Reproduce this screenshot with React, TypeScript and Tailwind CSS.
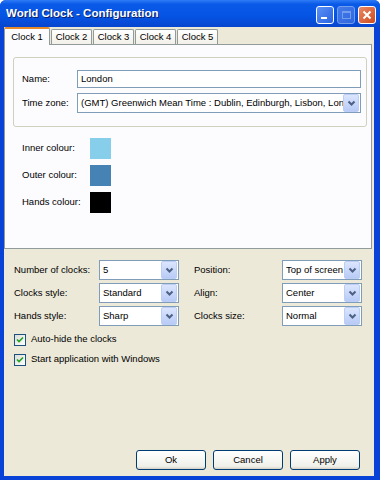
import React from "react";

const font = "font-['Liberation_Sans',Arial,sans-serif]";

const Chevron = () => (
  <svg width="9" height="7" viewBox="0 0 9 7" fill="none">
    <path d="M1.5 1.5 L4.5 4.5 L7.5 1.5" stroke="#4d6185" strokeWidth="2" />
  </svg>
);

const Combo = ({ value, width }: { value: string; width: string }) => (
  <div className={`${width} h-[20px] flex items-center border border-[#7f9db9] bg-white`}>
    <span className="flex-1 pl-[3px] overflow-hidden whitespace-nowrap text-black">{value}</span>
    <div className="w-[16px] h-[18px] mr-px flex items-center justify-center rounded-[2px] border border-[#bccdf6] bg-[linear-gradient(#dbe5fd,#b8cbf6)]">
      <Chevron />
    </div>
  </div>
);

const Check = ({ label }: { label: string }) => (
  <div className="flex items-center gap-[5px] h-[13px]">
    <div className="w-[12px] h-[12px] border border-[#1c5180] bg-[linear-gradient(135deg,#dcdcd5,#ffffff)] flex items-center justify-center">
      <svg width="8" height="8" viewBox="0 0 8 8">
        <path d="M1 3.5 L3 5.5 L7 1.5" stroke="#21a121" strokeWidth="1.6" fill="none" />
      </svg>
    </div>
    <span>{label}</span>
  </div>
);

const Btn = ({ label }: { label: string }) => (
  <div className="w-[70px] h-[20px] flex items-center justify-center rounded-[3px] border border-[#003c74] bg-[linear-gradient(#ffffff,#f0f0ea_85%,#d6d0c5)]">
    {label}
  </div>
);

export default function App() {
  const tabs = ["Clock 2", "Clock 3", "Clock 4", "Clock 5"];
  return (
    <div className={`${font} text-[9.5px] text-black w-[380px] h-[480px] flex flex-col bg-[#0842d6] rounded-t-[6px] overflow-hidden`}>
      {/* title bar */}
      <div className="h-[27px] flex items-center pl-[6px] pr-[4px] bg-[linear-gradient(#2f7cf7,#0a5ae8_15%,#0554e3_60%,#0845cf)]">
        <span className="text-white font-bold text-[11.5px] [text-shadow:1px_1px_0_#0a1f6a]">
          World Clock - Configuration
        </span>
        <div className="ml-auto flex gap-[3px] mt-[3px]">
          <div className="w-[18px] h-[18px] rounded-[3px] border border-white bg-[linear-gradient(135deg,#5a91f8,#2a63e0)] flex items-end justify-start pb-[4px] pl-[4px]">
            <div className="w-[6px] h-[2px] bg-white" />
          </div>
          <div className="w-[18px] h-[18px] rounded-[3px] border border-[#8fb0f0] bg-[linear-gradient(135deg,#5484ea,#3a6ee0)] flex items-center justify-center opacity-80">
            <div className="w-[9px] h-[8px] border border-[#90b0f0] border-t-2" />
          </div>
          <div className="w-[18px] h-[18px] rounded-[3px] border border-white bg-[linear-gradient(135deg,#e98a66,#cf4a1d)] flex items-center justify-center">
            <svg width="10" height="10" viewBox="0 0 10 10">
              <path d="M1.5 1.5 L8.5 8.5 M8.5 1.5 L1.5 8.5" stroke="white" strokeWidth="2" />
            </svg>
          </div>
        </div>
      </div>

      {/* body */}
      <div className="flex-1 ml-[4px] mr-[6px] mb-[4px] bg-[#ece9d8] flex flex-col">
        {/* tabs */}
        <div className="h-[17px] flex items-end">
          <div className="relative z-10 -mb-px w-[46px] h-[18px] bg-[#fcfcfe] border-x border-[#919b9c] border-t-[2px] border-t-[#e68b2c] rounded-t-[2px] flex items-start justify-center pt-[1px]">
            Clock 1
          </div>
          {tabs.map((t) => (
            <div
              key={t}
              className="w-[41px] h-[16px] -mb-px ml-px border border-b-0 border-[#919b9c] rounded-t-[2px] bg-[linear-gradient(#ffffff,#f1efe6)] flex items-center justify-center"
            >
              {t}
            </div>
          ))}
        </div>

        {/* panel */}
        <div className="mr-[2px] h-[205px] border border-[#919b9c] bg-[#fcfcfe] pt-[12px] pl-[8px]">
          <div className="w-[354px] h-[70px] rounded-[3px] border border-[#d0d0bf] pt-[12px] pl-[8px] flex flex-col gap-[5px]">
            <div className="flex items-center">
              <span className="w-[55px]">Name:</span>
              <div className="w-[284px] h-[18px] border border-[#7f9db9] bg-white flex items-center pl-[3px]">
                London
              </div>
            </div>
            <div className="flex items-center">
              <span className="w-[55px]">Time zone:</span>
              <Combo
                width="w-[284px]"
                value="(GMT) Greenwich Mean Time : Dublin, Edinburgh, Lisbon, London"
              />
            </div>
          </div>

          <div className="mt-[11px] ml-[9px] flex flex-col gap-[6px]">
            {[
              ["Inner colour:", "bg-[#87ceeb]"],
              ["Outer colour:", "bg-[#4682b4]"],
              ["Hands colour:", "bg-black"],
            ].map(([l, c]) => (
              <div key={l} className="flex items-start">
                <span className="w-[68px] pt-[3px]">{l}</span>
                <div className={`w-[21px] h-[21px] ${c}`} />
              </div>
            ))}
          </div>
        </div>

        {/* lower section */}
        <div className="pt-[11px] pl-[10px] flex flex-col gap-[3px]">
          {[
            ["Number of clocks:", "5", "Position:", "Top of screen"],
            ["Clocks style:", "Standard", "Align:", "Center"],
            ["Hands style:", "Sharp", "Clocks size:", "Normal"],
          ].map(([a, b, c, d]) => (
            <div key={a} className="flex items-center">
              <span className="w-[85px]">{a}</span>
              <Combo width="w-[80px]" value={b} />
              <span className="ml-[15px] w-[88px]">{c}</span>
              <Combo width="w-[80px]" value={d} />
            </div>
          ))}
        </div>
        <div className="mt-[7px] pl-[10px] flex flex-col gap-[7px]">
          <Check label="Auto-hide the clocks" />
          <Check label="Start application with Windows" />
        </div>

        <div className="mt-auto flex justify-end gap-[7px] pr-[14px] pb-[6px]">
          <Btn label="Ok" />
          <Btn label="Cancel" />
          <Btn label="Apply" />
        </div>
      </div>
    </div>
  );
}
